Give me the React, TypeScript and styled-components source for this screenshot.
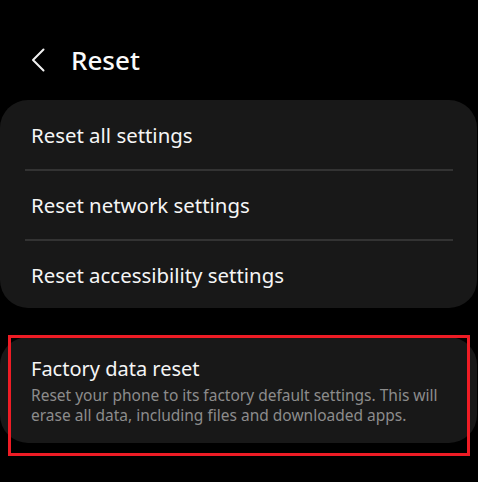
import React from "react";
import styled, { createGlobalStyle } from "styled-components";

const Global = createGlobalStyle`
  html, body { margin: 0; padding: 0; background: #000; }
  body { font-family: "Noto Sans", "Open Sans", sans-serif; color: #fafafa; }
`;

const Page = styled.div`
  width: 478px;
  height: 482px;
  overflow: hidden;
  background: #000;
  display: flex;
  flex-direction: column;
`;

const Header = styled.div`
  height: 100px;
  display: flex;
  align-items: center;
  padding: 20px 0 0 31px;
  box-sizing: border-box;
`;

const BackButton = styled.div`
  width: 20px;
  height: 26px;
  display: flex;
  align-items: center;
  margin-right: 20px;
`;

const Title = styled.h1`
  margin: 0;
  font-size: 26px;
  font-weight: 500;
  letter-spacing: 0;
  color: #fafafa;
`;

const Card = styled.div`
  background: #181818;
  border-radius: 28px;
  margin: 0 1px 0 0;
  display: flex;
  flex-direction: column;
`;

const Row = styled.div<{ $h: number }>`
  height: ${(p) => p.$h}px;
  display: flex;
  align-items: center;
  padding-left: 31px;
  font-size: 20.4px;
  color: #f5f5f5;
`;

const Divider = styled.div`
  height: 2px;
  background: #333;
  margin: 0 24px 0 25px;
`;

const HighlightWrap = styled.div`
  position: relative;
  margin-top: 29px;
`;

const DetailCard = styled(Card)`
  height: 106px;
  justify-content: center;
  padding: 0 30px 1px 31px;
  box-sizing: border-box;
`;

const DetailTitle = styled.div`
  font-size: 20px;
  color: #f5f5f5;
  line-height: 27px;
`;

const DetailText = styled.div`
  font-size: 15.5px;
  color: #8c8c8c;
  line-height: 20px;
  margin-top: 3px;
`;

const Highlight = styled.div`
  position: absolute;
  left: 8px;
  right: 8px;
  top: -2px;
  bottom: -13px;
  border: 3px solid #ee1c25;
  pointer-events: none;
`;

export default function App() {
  return (
    <>
      <Global />
      <Page>
        <Header>
          <BackButton>
            <svg width="14" height="24" viewBox="0 0 14 24" fill="none">
              <path d="M12.5 1.5 L2 12 L12.5 22.5" stroke="#f0f0f0" strokeWidth="2" strokeLinecap="round" strokeLinejoin="round" />
            </svg>
          </BackButton>
          <Title>Reset</Title>
        </Header>
        <Card>
          <Row $h={69}>Reset all settings</Row>
          <Divider />
          <Row $h={68}>Reset network settings</Row>
          <Divider />
          <Row $h={67}>Reset accessibility settings</Row>
        </Card>
        <HighlightWrap>
          <DetailCard>
            <DetailTitle>Factory data reset</DetailTitle>
            <DetailText>
              Reset your phone to its factory default settings. This will erase all data, including files and downloaded apps.
            </DetailText>
          </DetailCard>
          <Highlight />
        </HighlightWrap>
      </Page>
    </>
  );
}
